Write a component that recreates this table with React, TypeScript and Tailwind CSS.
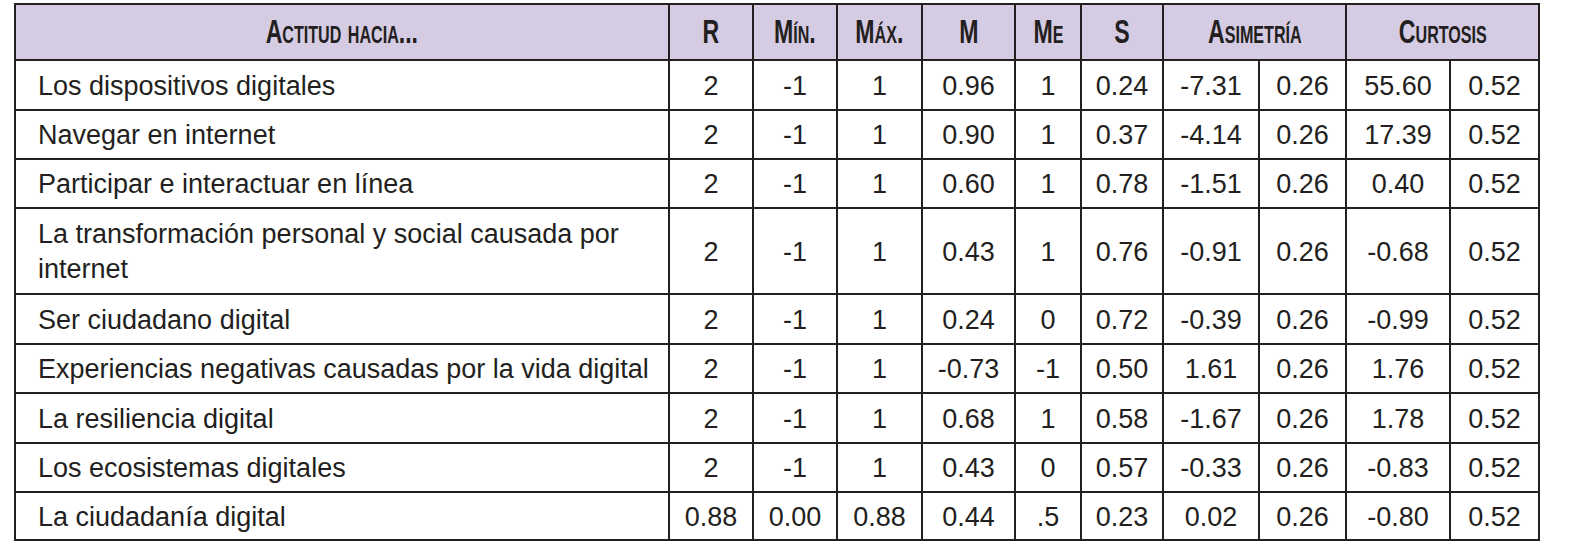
import React from 'react';

type Row = { label: string; v: string[]; h: string };

const rows: Row[] = [
  { label: 'Los dispositivos digitales', v: ['2', '-1', '1', '0.96', '1', '0.24', '-7.31', '0.26', '55.60', '0.52'], h: 'h-[50px]' },
  { label: 'Navegar en internet', v: ['2', '-1', '1', '0.90', '1', '0.37', '-4.14', '0.26', '17.39', '0.52'], h: 'h-[49px]' },
  { label: 'Participar e interactuar en línea', v: ['2', '-1', '1', '0.60', '1', '0.78', '-1.51', '0.26', '0.40', '0.52'], h: 'h-[49px]' },
  { label: 'La transformación personal y social causada por internet', v: ['2', '-1', '1', '0.43', '1', '0.76', '-0.91', '0.26', '-0.68', '0.52'], h: 'h-[86px]' },
  { label: 'Ser ciudadano digital', v: ['2', '-1', '1', '0.24', '0', '0.72', '-0.39', '0.26', '-0.99', '0.52'], h: 'h-[50px]' },
  { label: 'Experiencias negativas causadas por la vida digital', v: ['2', '-1', '1', '-0.73', '-1', '0.50', '1.61', '0.26', '1.76', '0.52'], h: 'h-[49px]' },
  { label: 'La resiliencia digital', v: ['2', '-1', '1', '0.68', '1', '0.58', '-1.67', '0.26', '1.78', '0.52'], h: 'h-[50px]' },
  { label: 'Los ecosistemas digitales', v: ['2', '-1', '1', '0.43', '0', '0.57', '-0.33', '0.26', '-0.83', '0.52'], h: 'h-[49px]' },
  { label: 'La ciudadanía digital', v: ['0.88', '0.00', '0.88', '0.44', '.5', '0.23', '0.02', '0.26', '-0.80', '0.52'], h: 'h-[48px]' },
];

const widths = ['w-[654px]', 'w-[84px]', 'w-[84px]', 'w-[85px]', 'w-[93px]', 'w-[66px]', 'w-[82px]', 'w-[96px]', 'w-[87px]', 'w-[104px]', 'w-[89px]'];

const Head = ({ children, span = 1 }: { children: React.ReactNode; span?: number }) => (
  <th colSpan={span} className="border-2 border-[#231f20] p-0 text-center font-bold">
    <span className="inline-block origin-center scale-x-[0.7] text-[33px] leading-none [font-variant:small-caps]">{children}</span>
  </th>
);

const App = () => {
  return (
    <div className="min-h-screen bg-white pl-[14px] pt-[3px] text-[#231f20]" style={{ fontFamily: '"Liberation Sans", Arial, sans-serif' }}>
      <table className="w-[1526px] table-fixed border-collapse border-2 border-[#231f20]">
        <colgroup>
          {widths.map((w, i) => (
            <col key={i} className={w} />
          ))}
        </colgroup>
        <thead>
          <tr className="h-[56px] bg-[#d5cbe3]">
            <Head>Actitud hacia...</Head>
            <Head>R</Head>
            <Head>Mín.</Head>
            <Head>Máx.</Head>
            <Head>M</Head>
            <Head>Me</Head>
            <Head>S</Head>
            <Head span={2}>Asimetría</Head>
            <Head span={2}>Curtosis</Head>
          </tr>
        </thead>
        <tbody>
          {rows.map((r) => (
            <tr key={r.label} className={r.h}>
              <td className="border-2 border-[#231f20] pt-[2px] pb-0 pl-[22px] pr-[8px] text-left text-[27px] leading-[35px]">{r.label}</td>
              {r.v.map((v, i) => (
                <td key={i} className="border-2 border-[#231f20] pt-[2px] pb-0 px-0 text-center text-[27px] leading-none">
                  {v}
                </td>
              ))}
            </tr>
          ))}
        </tbody>
      </table>
    </div>
  );
};

export default App;
